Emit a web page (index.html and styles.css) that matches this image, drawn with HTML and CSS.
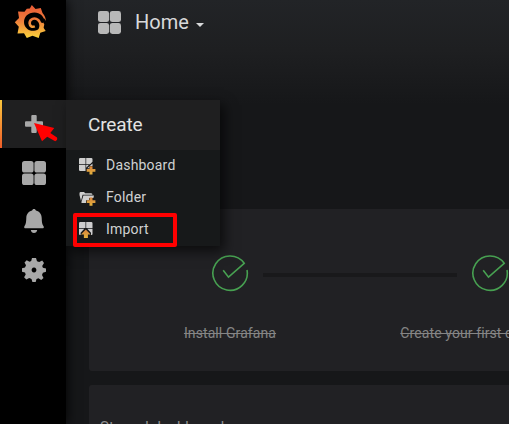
FILE: index.html
```html
<!DOCTYPE html>
<html lang="en">
<head>
<meta charset="utf-8">
<title>Home</title>
<link rel="stylesheet" href="styles.css">
</head>
<body>
<svg class="defs" width="0" height="0">
  <defs>
    <linearGradient id="flame" gradientUnits="userSpaceOnUse" x1="0" y1="1" x2="0" y2="34"><stop offset="0" stop-color="#e85a35"/><stop offset=".45" stop-color="#ee7a3b"/><stop offset="1" stop-color="#fbd43c"/></linearGradient>
    <linearGradient id="gold" x1="0" y1="0" x2="0" y2="1"><stop offset="0" stop-color="#d8823c"/><stop offset="1" stop-color="#e3b33d"/></linearGradient>
    <symbol id="grid" viewBox="0 0 24 24"><rect width="11.6" height="11.6" rx="2.6"/><rect x="12.4" width="11.6" height="11.6" rx="2.6"/><rect y="12.4" width="11.6" height="11.6" rx="2.6"/><rect x="12.4" y="12.4" width="11.6" height="11.6" rx="2.6"/></symbol>
    <symbol id="check" viewBox="0 0 38 38"><path d="M36 16A17.2 17.2 0 1 1 33.2 9.3L17.5 23.2L12.2 16.2"/></symbol>
  </defs>
</svg>
<div class="app">
  <nav class="sidebar">
    <a class="logo"><svg width="34" height="36" viewBox="0 0 34 36"><path fill="url(#flame)" d="M17.8 1L21.5 5L26.8 4L28.5 9Q32 13 31.7 17Q30.9 15 29.7 13.8Q30.5 19 28.7 22.5L31.7 27L26.3 28.8L24.7 34L18.5 31.8L12.8 34L10 29.2L3.5 29.5L4.8 22.8L.8 18.2L5 14L4 7.5L10.5 7.7L12.8 4.8L15.8 4.5Z"/><path d="M31.2 18.5C29.8 12 26 8.4 20.5 8.4C14 8.4 10 12.8 10 18C10 23.5 14.5 27.2 20 26.8C24.5 26.4 27.6 23 27.8 19Z" fill="#000"/><path d="M25.6 26C27.2 22.6 26.6 18.4 24.2 16C20.5 13 15.6 15 15.6 19.2C15.8 22.2 18 23.5 20.8 22.4" fill="none" stroke="url(#flame)" stroke-width="2.6"/><path d="M30.3 20C29.8 25 27.8 26.8 25.5 27.5L26.5 22L26.2 18Z" fill="url(#flame)"/></svg></a>
    <a class="item active"><svg width="18" height="18" viewBox="0 0 18 18"><path d="M7.3 0h3.4q1 0 1 1v5.3H17q1 0 1 1v3.4q0 1-1 1h-5.3V17q0 1-1 1H7.3q-1 0-1-1v-5.3H1q-1 0-1-1V7.3q0-1 1-1h5.3V1q0-1 1-1Z"/></svg></a>
    <a class="item"><svg width="24" height="24"><use href="#grid"/></svg></a>
    <a class="item"><svg width="20" height="24" viewBox="0 0 20 24"><path d="M10 0C9 0 8.3.6 8.1 1.6C4.3 2.4 2.5 5.4 2.3 9C2.1 13.4 2 15 .3 17.5Q-.1 19.3 1 19.3H19Q20.1 19.3 19.7 17.5C18 15 17.9 13.4 17.7 9C17.5 5.4 15.7 2.4 11.9 1.6C11.7.6 11 0 10 0ZM6.8 21H13.2Q12.7 24 10 24T6.8 21Z"/></svg></a>
    <a class="item gear"><svg width="24" height="24" viewBox="0 0 24 24"><path fill-rule="evenodd" d="M10 0H14L15 3.2L17.2 4.1L20.2 2.6L22 5L20.2 8L20.9 9.7L24 10.5V13.8L20.9 14.8L20 17L21.5 20L19.2 22L16.5 20.3L14.5 21L13.7 24H10.4L9.5 21L7.2 20.1L4.3 21.6L2.1 19.2L3.7 16.5L3 14.5L0 13.7V10.3L3 9.5L4 7.3L2.5 4.4L4.7 2.2L7.5 3.8L9.2 3.1ZM12 9.6a2.4 2.4 0 1 0 .01 0Z"/></svg></a>
  </nav>
  <main>
    <header><svg width="23" height="23"><use href="#grid"/></svg><span class="title">Home</span><i class="caret"></i></header>
    <section class="panel steps">
      <div class="step"><svg width="38" height="38"><use href="#check"/></svg><span>Install Grafana</span></div>
      <i class="line"></i>
      <div class="step"><svg width="38" height="38"><use href="#check"/></svg><span>Create your first data source</span></div>
    </section>
    <section class="panel starred">Starred dashboards</section>
  </main>
  <div class="menu">
    <div class="menu-title">Create</div>
    <a><svg width="17" height="17" viewBox="0 0 17 17"><path d="M1.2 0H6.5V6.3H0V1.2Q0 0 1.2 0ZM7.2 0H12.3Q13.5 0 13.5 1.2V3.8L11 6.3H7.2ZM0 7H6.5V13H1.2Q0 13 0 12ZM7.2 7H9.8L7.2 9.8ZM13.5 5.5V8H10.4V10.3H8.3Z"/><path fill="url(#gold)" d="M10.5 8.2h3v2.9h2.9v2.7h-2.9v2.7h-3v-2.7H7.7v-2.7h2.8Z"/></svg>Dashboard</a>
    <a><svg width="17" height="17" viewBox="0 0 17 17"><path d="M.5 5V3.2Q.5 2 1.7 2H5L6.2 3.3H12.2Q13.5 3.3 13.5 4.8H3.6L2 11ZM4.4 5.6H15L14.4 8H10V10.3H7V13H3Q2 13 2.5 11.8Z"/><path fill="url(#gold)" d="M10.5 7.5h3v2.8h2.9v2.7h-2.9v2.7h-3v-2.7H7.7v-2.7h2.8Z"/></svg>Folder</a>
    <a><svg width="17" height="17" viewBox="0 0 17 17"><path d="M1.2 0H6.5V6H0V1.2Q0 0 1.2 0ZM7.2 0H12.3Q13.5 0 13.5 1.2V6H7.2ZM0 6.7H5.3L1.6 10.7V13H1Q0 13 0 12ZM8.3 6.7H13.5V12Q13.5 13 12.5 13H12V10.7Z"/><path fill="url(#gold)" d="M6.8 7.6L11.6 12.4H8.9V16H4.9V12.4H2Z"/></svg>Import</a>
  </div>
  <div class="highlight"></div>
  <svg class="pointer" width="24" height="19" viewBox="0 0 24 19"><path d="M0 0L20.3 5L16.3 10L23 14.5Q24 17 21.2 18.2L13.2 13.8L8 18.3Z"/></svg>
</div>
</body>
</html>
```
FILE: styles.css
```css
* { box-sizing: border-box; }
body { margin: 0; overflow: hidden; background: #161719; font-family: Roboto, sans-serif; }
.defs { position: absolute; }
.app { position: relative; display: flex; width: 509px; height: 424px; overflow: hidden; }
svg { flex: none; }
.sidebar { display: flex; flex-direction: column; width: 66px; flex: none; background: #000; fill: #a8a8a8; box-shadow: 0 0 12px #000; z-index: 1; }
.logo { height: 99px; padding: 4px 0 0 14px; }
.item { display: flex; align-items: center; justify-content: center; height: 48.4px; padding-left: 2px; }
.item.active { height: 48px; margin: 1px 0 .4px; background: #1f1f20; border-left: 2px solid; border-image: linear-gradient(#fbca3e, #f05a28) 1; padding: 0 0 1px; }
.item.gear { height: 50px; }
main { flex: none; width: 700px; padding-left: 23px; background: linear-gradient(#222427 0, #1e1f21 50px, #161719 104px); }
header { display: flex; align-items: center; height: 45px; padding-left: 9px; fill: #b8b8b8; color: #d8d9da; }
.title { margin: -1px 0 0 14px; font-size: 20px; }
.caret { margin: 5px 0 0 7px; border: 4px solid transparent; border-top-color: #d8d9da; border-bottom: 0; }
.panel { background: #212124; border-radius: 3px; }
.steps { display: flex; height: 162px; margin-top: 164px; padding: 45px 0 0 41px; }
.step { display: flex; flex-direction: column; align-items: center; width: 200px; flex: none; color: #858585; font-size: 14px; letter-spacing: .1px; text-decoration: line-through; white-space: nowrap; }
.step svg { fill: none; stroke: #47a051; stroke-width: 1.6; }
.step span { margin-top: 33px; }
.line { width: 194px; height: 4px; margin: 19px -67px 0; flex: none; background: #19191b; }
.starred { height: 160px; margin-top: 14px; padding: 33px 11px; color: #8e8e8e; font-size: 15px; letter-spacing: .05px; line-height: 18px; }
.menu { position: absolute; z-index: 2; left: 66px; top: 100px; width: 154px; height: 146px; background: #17191a; box-shadow: 4px 5px 12px #000a; color: #d0d1d2; font-size: 14px; }
.menu-title { height: 50px; padding-left: 22px; background: #1f1f20; color: #e3e3e3; font-size: 19px; letter-spacing: -.15px; line-height: 50px; }
.menu a { display: flex; align-items: center; height: 32px; padding: 0 0 2px 13px; fill: #cecece; letter-spacing: .2px; }
.menu a svg { margin: 2px 10px 0 0; }
.highlight { position: absolute; z-index: 3; left: 73px; top: 213px; width: 104px; height: 34px; border: 4px solid #f00; border-radius: 2px; }
.pointer { position: absolute; z-index: 4; left: 34px; top: 123px; fill: #f00; }
```
